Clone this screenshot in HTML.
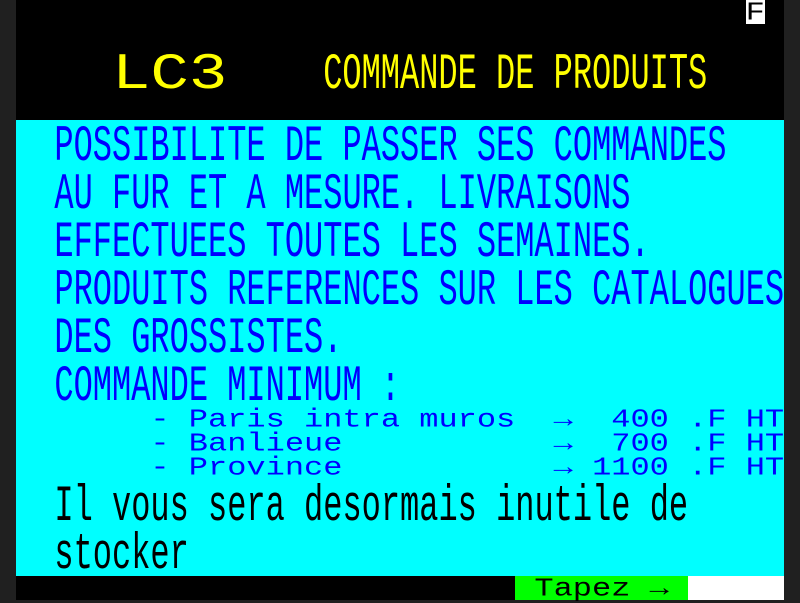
<!DOCTYPE html>
<html><head><meta charset="utf-8"><style>
html,body{margin:0;padding:0;}
body{width:800px;height:600px;background:#202020;position:relative;overflow:hidden;font-family:"Liberation Mono",monospace;}
.scr{position:absolute;left:16px;top:0;width:768px;height:600px;background:#000;}
.l{position:absolute;white-space:pre;font-size:32px;line-height:30px;transform-origin:0 0;}
.dh{transform:scaleY(1.6);}
.sh{transform:scaleY(0.8);}
.dd{transform:scale(2,1.6);}
</style></head><body>
<div class="scr">
<div style="position:absolute;left:0;top:120px;width:768px;height:456px;background:#0ff"></div>
<div style="position:absolute;left:499.2px;top:576px;width:172.8px;height:24px;background:#0f0"></div>
<div style="position:absolute;left:672px;top:576px;width:96px;height:24px;background:#fff"></div>
<div style="position:absolute;left:729.6px;top:0;width:19.2px;height:24px;background:#fff"></div>
<div class="l sh" style="left:729.6px;top:1px;color:#000">F</div>
<div class="l dd" style="left:96px;top:51px;color:#ff0">LC3</div>
<div class="l dh" style="left:307.2px;top:51px;color:#ff0">COMMANDE DE PRODUITS</div>
<div class="l dh" style="left:38.4px;top:123px;color:#00f">POSSIBILITE DE PASSER SES COMMANDES</div>
<div class="l dh" style="left:38.4px;top:171px;color:#00f">AU FUR ET A MESURE. LIVRAISONS</div>
<div class="l dh" style="left:38.4px;top:219px;color:#00f">EFFECTUEES TOUTES LES SEMAINES.</div>
<div class="l dh" style="left:38.4px;top:267px;color:#00f">PRODUITS REFERENCES SUR LES CATALOGUES</div>
<div class="l dh" style="left:38.4px;top:315px;color:#00f">DES GROSSISTES.</div>
<div class="l dh" style="left:38.4px;top:363px;color:#00f">COMMANDE MINIMUM :</div>
<div class="l sh" style="left:134.4px;top:408px;color:#00f">- Paris intra muros  →  400 .F HT</div>
<div class="l sh" style="left:134.4px;top:432px;color:#00f">- Banlieue           →  700 .F HT</div>
<div class="l sh" style="left:134.4px;top:456px;color:#00f">- Province           → 1100 .F HT</div>
<div class="l dh" style="left:38.4px;top:483px;color:#000">Il vous sera desormais inutile de</div>
<div class="l dh" style="left:38.4px;top:531px;color:#000">stocker</div>
<div class="l sh" style="left:499.2px;top:577px;color:#000"> Tapez → </div>
</div>
</body></html>
